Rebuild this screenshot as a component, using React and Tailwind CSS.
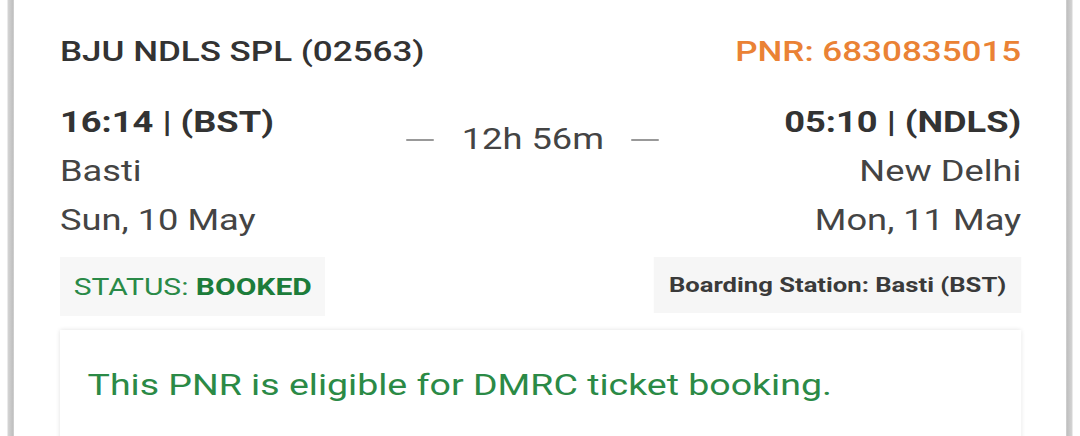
// the screenshot is stretched ~1.25x horizontally, so the card is laid out at 864px and widened
export default function App() {
  return (
    <div
      className="w-[1080px] h-[436px] bg-white overflow-hidden"
      style={{ fontFamily: "Roboto, 'Liberation Sans', sans-serif" }}
    >
      <div className="w-[864px] h-full flex origin-left scale-x-125">
        <div className="w-[6px] shrink-0" />
        <div className="w-[5px] shrink-0 bg-gradient-to-r from-[#d6d6d6] to-[#bcbcbc]" />
        <div className="flex-1 flex flex-col">
          <div className="h-[10px]" />
          <div className="mx-[5px] h-[2px] bg-[#f3f3f3]" />
          <div className="flex-1 pl-[37px] pr-[36px] pt-[33px]">
            <div className="flex justify-between items-center h-[38px]">
              <div className="text-[28px] font-medium text-[#333]">BJU NDLS SPL (02563)</div>
              <div className="text-[28px] font-medium text-[#ea8235]">PNR: 6830835015</div>
            </div>
            <div className="flex justify-between mt-[27px]">
              <div className="flex flex-col text-[#444] text-[29px] leading-[49px]">
                <div className="font-bold text-[#333]">16:14 | (BST)</div>
                <div>Basti</div>
                <div>Sun, 10 May</div>
              </div>
              <div className="flex items-center gap-[22px] h-[84px] pl-[6px] text-[#444] text-[29px]">
                <div className="w-[22px] h-[2px] bg-[#999]" />
                <div>12h 56m</div>
                <div className="w-[22px] h-[2px] bg-[#999]" />
              </div>
              <div className="flex flex-col items-end text-[#444] text-[29px] leading-[49px]">
                <div className="font-bold text-[#333]">05:10 | (NDLS)</div>
                <div>New Delhi</div>
                <div>Mon, 11 May</div>
              </div>
            </div>
            <div className="flex justify-between items-start mt-[12px]">
              <div className="bg-[#f7f7f7] h-[59px] px-[11px] flex items-center text-[24px] text-[#2a8a48]">
                STATUS:&nbsp;<span className="font-bold text-[#1c7c3a]">BOOKED</span>
              </div>
              <div className="bg-[#f6f6f6] h-[56px] px-[12px] flex items-center text-[20.5px] font-bold text-[#3a3a3a]">
                Boarding Station: Basti (BST)
              </div>
            </div>
            <div className="mt-[14px] h-[120px] bg-white shadow-[0_0_4px_rgba(0,0,0,0.12)] px-[22px] pt-[32px] text-[30px] text-[#2b8a46]">
              This PNR is eligible for DMRC ticket booking.
            </div>
          </div>
        </div>
        <div className="w-[5px] shrink-0 bg-gradient-to-r from-[#bcbcbc] to-[#d6d6d6]" />
        <div className="w-[6px] shrink-0" />
      </div>
    </div>
  );
}
